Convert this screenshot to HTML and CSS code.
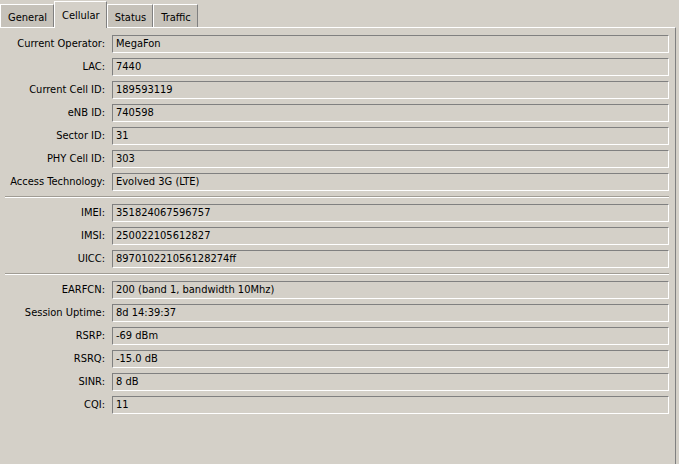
FILE: index.html
```html
<!DOCTYPE html>
<html>
<head>
<meta charset="utf-8">
<link rel="stylesheet" href="styles.css">
</head>
<body>
<div class="tabs">
  <div class="tab">General</div>
  <div class="tab active">Cellular</div>
  <div class="tab">Status</div>
  <div class="tab">Traffic</div>
</div>
<div class="panel">
  <div class="grid">
    <div class="label">Current Operator:</div><div class="field">MegaFon</div>
    <div class="label">LAC:</div><div class="field">7440</div>
    <div class="label">Current Cell ID:</div><div class="field">189593119</div>
    <div class="label">eNB ID:</div><div class="field">740598</div>
    <div class="label">Sector ID:</div><div class="field">31</div>
    <div class="label">PHY Cell ID:</div><div class="field">303</div>
    <div class="label">Access Technology:</div><div class="field">Evolved 3G (LTE)</div>
    <div class="sep"></div>
    <div class="label">IMEI:</div><div class="field">351824067596757</div>
    <div class="label">IMSI:</div><div class="field">250022105612827</div>
    <div class="label">UICC:</div><div class="field">897010221056128274ff</div>
    <div class="sep"></div>
    <div class="label">EARFCN:</div><div class="field">200 (band 1, bandwidth 10Mhz)</div>
    <div class="label">Session Uptime:</div><div class="field">8d 14:39:37</div>
    <div class="label">RSRP:</div><div class="field">-69 dBm</div>
    <div class="label">RSRQ:</div><div class="field">-15.0 dB</div>
    <div class="label">SINR:</div><div class="field">8 dB</div>
    <div class="label">CQI:</div><div class="field">11</div>
  </div>
</div>
</body>
</html>
```
FILE: styles.css
```css
html, body {
  margin: 0;
  padding: 0;
  background: #d4d0c8;
  font-family: "DejaVu Sans Condensed", "DejaVu Sans", Verdana, sans-serif;
  font-size: 11px;
  color: #000;
  height: 100%;
}
.tabs {
  display: flex;
  align-items: flex-end;
  height: 27px;
  position: relative;
  z-index: 1;
}
.tab {
  box-sizing: border-box;
  height: 23px;
  line-height: 25px;
  padding: 0 6px 0 7px;
  background: #c6c2ba;
  border-top: 1px solid #ffffff;
  border-left: 1px solid #ffffff;
  border-right: 1px solid #808080;
  white-space: nowrap;
}
.tab.active {
  height: 27px;
  line-height: 27px;
  background: #d4d0c8;
  margin-bottom: -1px;
  padding-bottom: 1px;
}
.panel {
  box-sizing: border-box;
  width: 676px;
  height: calc(100% - 27px);
  border-top: 1px solid #ffffff;
  border-right: 1px solid #808080;
  padding: 7px 6px 0 0;
}
.grid {
  display: grid;
  grid-template-columns: 105px 1fr;
  column-gap: 7px;
  row-gap: 5px;
}
.label {
  text-align: right;
  line-height: 18px;
  white-space: nowrap;
}
.field {
  box-sizing: border-box;
  height: 18px;
  line-height: 16px;
  padding-left: 3px;
  border-top: 1px solid #808080;
  border-left: 1px solid #808080;
  border-bottom: 1px solid #ffffff;
  border-right: 1px solid #ffffff;
  white-space: nowrap;
}
.sep {
  grid-column: 1 / -1;
  margin: 0 0 1px 5px;
  border-top: 1px solid #a09c94;
  border-bottom: 1px solid #ffffff;
  height: 0;
}
```
